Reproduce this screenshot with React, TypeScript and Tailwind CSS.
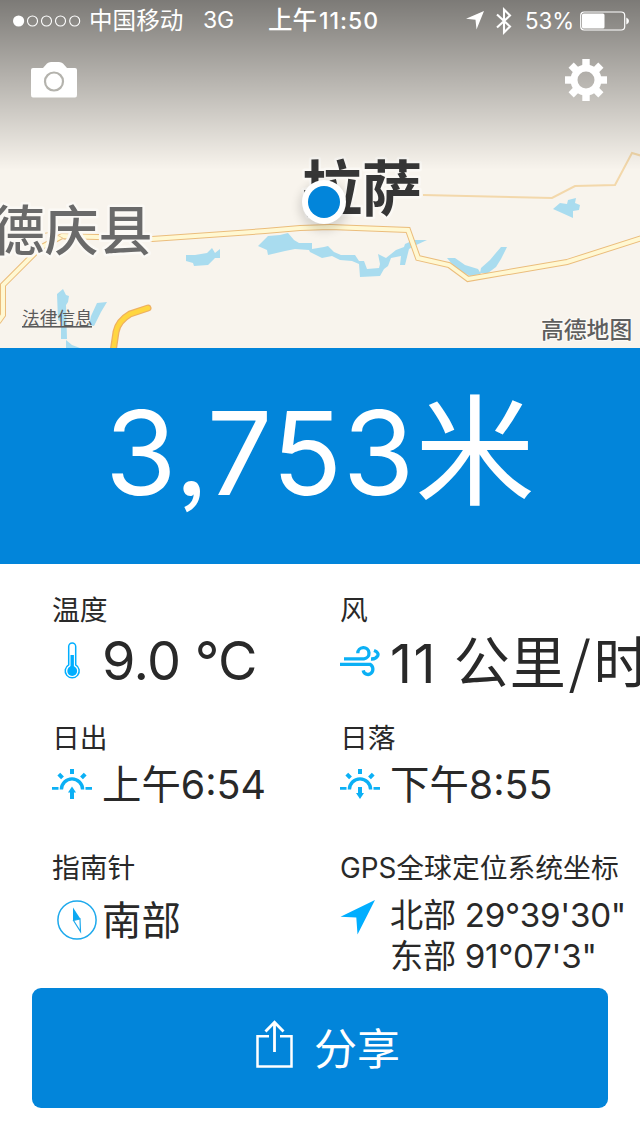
import type { ReactNode } from "react";

const WATER = [
    "186,255 195,255 207,253 212,248 215,253 220,249 220,258 215,258 208,265 194,266 193,263 186,261",
    "258,246 268,236 280,235 288,233 294,240 299,243 312,243 312,249 324,247 328,246 334,252 341,255 355,255 359,261 364,261 367,269 379,268 380,264 378,254 386,258 396,250 404,247 405,244 414,240 427,240 414,246 409,249 405,265 400,265 401,256 391,258 388,266 384,269 380,276 360,277 359,264 352,261 340,260 332,256 322,258 310,252 309,250 295,249 285,251 268,255 267,250",
    "447,258 455,258 465,265 478,269 481,274 470,276 460,271 452,264",
    "481,268 490,260 495,254 501,247 507,247 501,259 496,267 488,273 480,273",
    "553,209 560,203 567,204 568,200 576,198 575,203 580,205 579,210 573,211 573,218 562,213",
    "57,294 63,289 66,295 69,296 68,302 66,305 67,339 61,339 61,322 58,320",
    "97,303 107,302 101,312 94,326 89,325 91,316",
    "66,340 72,345 80,348 66,348",
];

const MAIN_ROAD = "-2,322 3,315 3,285 40,248 62,236 97,237 152,239 265,231 300,228 330,227 408,230 418,258 449,265 468,279 567,262 642,238";
const SIDE_ROAD = "423,195 552,198 575,186 615,185 632,153 642,156";
const YELLOW_ROAD = "M148 308 L130 314 Q118 321 116 332 L113 352";

function MapView() {
    return (
        <svg viewBox="0 0 640 348" className="col-start-1 row-start-1 block h-[348px] w-[640px]">
            <rect width="640" height="348" fill="#f8f4ed" />
            {WATER.map((points) => (
                <polygon key={points} points={points} fill="#a9dcef" />
            ))}
            <polyline points={SIDE_ROAD} fill="none" stroke="#f3d8ab" strokeWidth="2" />
            <polyline points={MAIN_ROAD} fill="none" stroke="#ebbd7c" strokeWidth="6" />
            <polyline points={MAIN_ROAD} fill="none" stroke="#fff8d2" strokeWidth="4" />
            <path d="M30 236 L52 232 L66 240" fill="none" stroke="#ebc790" strokeWidth="1" />
            <path d={YELLOW_ROAD} fill="none" stroke="#eeb061" strokeWidth="7" strokeLinecap="round" />
            <path d={YELLOW_ROAD} fill="none" stroke="#ffd640" strokeWidth="4.5" strokeLinecap="round" />
            <g className="font-['Noto_Sans_CJK_SC',sans-serif]" stroke="#fbf9f5" strokeLinejoin="round" paintOrder="stroke">
                <text x="-9.5" y="251" fontSize="54" fontWeight="500" fill="#6a6a6a" strokeWidth="5">德庆县</text>
                <text x="302" y="211" fontSize="60" fontWeight="700" fill="#363636" strokeWidth="5">拉萨</text>
                <text x="22" y="325" fontSize="17.7" fill="#5b5b5b" strokeWidth="0">法律信息</text>
                <text x="541" y="338" fontSize="22.8" fontWeight="500" fill="#5e5e5e" strokeWidth="2.5">高德地图</text>
            </g>
            <rect x="22" y="326" width="70" height="1.6" fill="#5b5b5b" />
            <circle cx="324" cy="206" r="25" fill="#000" opacity="0.13" className="blur-[5px]" />
            <circle cx="324" cy="202" r="22" fill="#fff" />
            <circle cx="324" cy="202" r="16" fill="#0285da" />
        </svg>
    );
}

function Signal() {
    return (
        <svg viewBox="0 0 70 12" className="ml-[13px] h-3 w-[70px]">
            <circle cx="5.6" cy="6" r="5.6" fill="#fff" />
            {[19.5, 33.5, 47.5, 61.7].map((cx) => (
                <circle key={cx} cx={cx} cy="6" r="5" fill="none" stroke="#fff" strokeWidth="1.1" />
            ))}
        </svg>
    );
}

function StatusBar() {
    return (
        <div className="flex h-[41px] items-center whitespace-nowrap text-white">
            <Signal />
            <span className="ml-[6px] w-[114px] text-[23.6px]">中国移动</span>
            <span className="w-[65px] text-[23px] tracking-[-0.2px]">3G</span>
            <span className="w-[198px] text-[23px] font-medium">
                <span className="text-[24.5px]">上午</span>
                <span className="ml-0.5 tracking-[1px]">11:50</span>
            </span>
            <svg viewBox="0 0 18 19" className="h-[19px] w-[18px]">
                <path d="M18 0 L10.5 18.5 L9.5 8.8 L0 7.7Z" fill="#fff" />
            </svg>
            <svg viewBox="0 0 16 28" className="ml-3 h-7 w-4" fill="none" stroke="#fff" strokeWidth="2.1">
                <path d="M1 7.5 L14 19.5 L8 25.5 V2.5 L14 8.5 L1 20.5" />
            </svg>
            <span className="ml-[13px] w-[55px] text-[22.3px]">53%</span>
            <svg viewBox="0 0 50 20" className="h-5 w-[50px]">
                <rect x="0.7" y="1" width="44" height="18" rx="3.5" fill="none" stroke="#fff" strokeWidth="1.2" />
                <rect x="2" y="2.5" width="22.5" height="15" rx="1.5" fill="#fff" />
                <path d="M46.3 6.5 Q49 7.5 49 10 T46.3 13.5Z" fill="#fff" />
            </svg>
        </div>
    );
}

function CameraIcon() {
    return (
        <svg viewBox="0 0 46 36" className="h-9 w-[46px]">
            <path d="M2 6 H12 L16 1.5 Q17.5 0 20 0 H28 Q30.5 0 32 1.5 L36 6 H44 Q46 6 46 8 V33 Q46 35.5 44 35.5 H2 Q0 35.5 0 33 V8 Q0 6 2 6Z" fill="#fff" />
            <circle cx="23" cy="19.5" r="9" fill="none" stroke="#b4b3ad" strokeWidth="2.2" />
        </svg>
    );
}

function GearIcon() {
    return (
        <svg viewBox="-21 -21 42 42" className="h-[42px] w-[42px]">
            <circle r="12" fill="none" stroke="#fff" strokeWidth="7" />
            {[0, 45, 90, 135, 180, 225, 270, 315].map((deg) => (
                <rect key={deg} x="-3.7" y="-21" width="7.4" height="9" fill="#fff" transform={`rotate(${deg})`} />
            ))}
        </svg>
    );
}

function ThermometerIcon() {
    return (
        <svg viewBox="0 0 40 40" className="h-10 w-10">
            <path d="M16.7 23.8 V5.5 a3.5 3.5 0 0 1 7 0 V23.8 a7 7 0 1 1 -7 0Z" fill="none" stroke="#00aeff" strokeWidth="1.5" />
            <rect x="18.5" y="14" width="3.4" height="14" fill="#00aeff" />
            <circle cx="20.2" cy="30" r="4.9" fill="#00aeff" />
        </svg>
    );
}

function WindIcon() {
    return (
        <svg viewBox="0 0 40 40" className="h-10 w-10" fill="none" stroke="#0bb0f5" strokeWidth="3.3">
            <path d="M4 17.8 H24 a5.6 5.6 0 1 0 -6.200 -5.500" />
            <path d="M0 23.300 H30 a4.900 5.300 0 1 1 -6.800 6" />
            <path d="M34 9.500 Q39.200 11.500 37.700 14.800 Q36 18.300 31 18" />
        </svg>
    );
}

function SunIcon({ down }: { down?: boolean }) {
    return (
        <svg viewBox="0 0 40 40" className="h-10 w-10" fill="none" stroke="#0bb0f5" strokeWidth="3.4">
            <path d="M9.4 25.5 a10.6 10.6 0 0 1 21.2 0" />
            <path d="M20 10 V5 M10.5 13.8 L6.8 10.1 M29.5 13.8 L33.2 10.1" strokeWidth="4" />
            <path d="M0 24.3 H6.5 M33.5 24.3 H40" strokeWidth="2.8" />
            <path d={down ? "M20 23 V31" : "M20 35 V27"} strokeWidth="4" />
            <path d={down ? "M16 29 H24 L20 35Z" : "M16 28.5 H24 L20 22.5Z"} fill="#0bb0f5" stroke="none" />
        </svg>
    );
}

function CompassIcon() {
    return (
        <svg viewBox="0 0 40 40" className="ml-[5px] h-10 w-10">
            <circle cx="20" cy="20" r="19.1" fill="none" stroke="#1da9ec" strokeWidth="1.5" />
            <path d="M16 7.5 L23.5 19 L16 21Z" fill="#0da9f2" />
            <path d="M16.5 20.5 L23 19 L23.5 31.5Z" fill="#fff" stroke="#1da9ec" strokeWidth="1.2" />
        </svg>
    );
}

function ArrowIcon() {
    return (
        <svg viewBox="0 0 40 40" className="mb-1.5 h-10 w-10">
            <path d="M35 3 L17.5 37.5 L16.3 20.5 L0.5 19.7Z" fill="#00aeff" />
        </svg>
    );
}

function ShareIcon() {
    return (
        <svg viewBox="0 0 38 50" className="mb-1.5 h-[50px] w-[38px]" fill="none" stroke="#fff" strokeWidth="2.5">
            <path d="M13 16.2 H1.5 V46.5 H35.5 V16.2 H24" />
            <path d="M18.5 32 V2.5 M9.5 11.5 L18.5 2.2 L27.5 11.5" strokeWidth="2.8" />
        </svg>
    );
}

interface MetricProps {
    label: ReactNode;
    icon: ReactNode;
    rowClass: string;
    children: ReactNode;
}

function Metric({ label, icon, rowClass, children }: MetricProps) {
    return (
        <div className="min-w-0 overflow-hidden whitespace-nowrap">
            <div className="h-9 text-[27.8px] leading-9">{label}</div>
            <div className={`flex items-center ${rowClass}`}>
                <div className="flex w-[50px] shrink-0">{icon}</div>
                {children}
            </div>
        </div>
    );
}

export default function App() {
    return (
        <div className="flex h-[1136px] w-[640px] flex-col overflow-hidden bg-white font-[Inter,'Noto_Sans_CJK_SC',sans-serif] text-[#292929]">
            <header className="grid h-[348px] shrink-0">
                <MapView />
                <div className="z-10 col-start-1 row-start-1 h-[170px] bg-linear-to-b from-black/50 to-black/0">
                    <StatusBar />
                    <div className="flex items-center justify-between pt-[18px] pr-[33px] pl-[31px]">
                        <CameraIcon />
                        <GearIcon />
                    </div>
                </div>
            </header>

            <section className="flex h-[216px] shrink-0 items-center justify-center bg-[#0285da] pb-1.5 text-white [font-feature-settings:'ss03']">
                <span className="text-[116px] leading-none tracking-[0.5px]">3,753</span>
                <span className="text-[120px] leading-none">米</span>
            </section>

            <main className="grid h-[424px] shrink-0 grid-cols-[288px_300px] grid-rows-[128px_130px_138px] pt-7 pl-[52px]">
                <Metric label="温度" icon={<ThermometerIcon />} rowClass="h-[66px]">
                    <span className="text-[54px] leading-none tracking-[-0.7px]">9.0 °C</span>
                </Metric>
                <Metric label="风" icon={<WindIcon />} rowClass="h-[66px]">
                    <span className="text-[56px] leading-none">
                        <span className="text-[54px] tracking-[1.5px]">11 </span>
                        公里
                        <span className="mx-[3px] font-['Noto_Sans_CJK_SC',sans-serif]">/</span>
                        时
                    </span>
                </Metric>
                <Metric label="日出" icon={<SunIcon />} rowClass="h-14">
                    <span className="pt-[3px] text-[39.4px] leading-none">上午6:54</span>
                </Metric>
                <Metric label="日落" icon={<SunIcon down />} rowClass="h-14">
                    <span className="pt-[3px] text-[39.4px] leading-none">下午8:55</span>
                </Metric>
                <Metric label="指南针" icon={<CompassIcon />} rowClass="h-[68px]">
                    <span className="pt-[3px] text-[39.4px] leading-none">南部</span>
                </Metric>
                <Metric label="GPS全球定位系统坐标" icon={<ArrowIcon />} rowClass="h-[68px]">
                    <div className="pt-8 text-[33.2px] leading-[41px] tracking-[-0.3px]">
                        <div>北部 29°39'30"</div>
                        <div>东部 91°07'3"</div>
                    </div>
                </Metric>
            </main>

            <button className="mx-8 flex h-[120px] shrink-0 items-center justify-center gap-[20px] rounded-[9px] bg-[#0285da] pl-4 text-white">
                <ShareIcon />
                <span className="pt-0.5 text-[43px] leading-none">分享</span>
            </button>
        </div>
    );
}
